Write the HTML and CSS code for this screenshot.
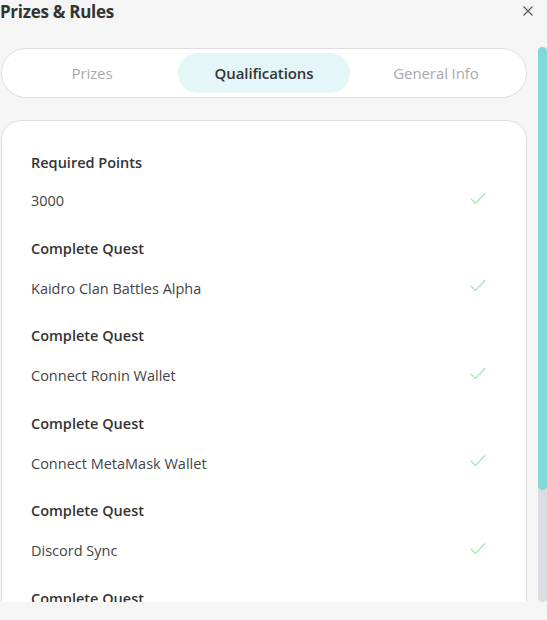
FILE: index.html
```html
<!DOCTYPE html>
<html>
<head>
<meta charset="utf-8">
<link rel="stylesheet" href="styles.css">
</head>
<body>
<div class="modal">
  <header class="modal-head">
    <h1 class="title">Prizes &amp; Rules</h1>
    <button class="close" aria-label="Close">
      <svg width="10" height="10" viewBox="0 0 10 10"><path d="M0.5 0.5L9.5 9.5M9.5 0.5L0.5 9.5" stroke="#555" stroke-width="1.1" fill="none"/></svg>
    </button>
  </header>
  <div class="body">
    <div class="content">
      <nav class="tabs">
        <div class="tab">Prizes</div>
        <div class="tab active">Qualifications</div>
        <div class="tab">General Info</div>
      </nav>
      <section class="card">
        <div class="item first">
          <div class="label">Required Points</div>
          <div class="row"><span class="value">3000</span><svg class="check" width="16" height="13" viewBox="0 0 16 13"><path d="M0.8 6.8L5.4 11.4L15.2 1.2" stroke="#a9e2b4" stroke-width="1.3" fill="none"/></svg></div>
        </div>
        <div class="item">
          <div class="label">Complete Quest</div>
          <div class="row"><span class="value">Kaidro Clan Battles Alpha</span><svg class="check" width="16" height="13" viewBox="0 0 16 13"><path d="M0.8 6.8L5.4 11.4L15.2 1.2" stroke="#a9e2b4" stroke-width="1.3" fill="none"/></svg></div>
        </div>
        <div class="item">
          <div class="label">Complete Quest</div>
          <div class="row"><span class="value">Connect Ronin Wallet</span><svg class="check" width="16" height="13" viewBox="0 0 16 13"><path d="M0.8 6.8L5.4 11.4L15.2 1.2" stroke="#a9e2b4" stroke-width="1.3" fill="none"/></svg></div>
        </div>
        <div class="item">
          <div class="label">Complete Quest</div>
          <div class="row"><span class="value">Connect MetaMask Wallet</span><svg class="check" width="16" height="13" viewBox="0 0 16 13"><path d="M0.8 6.8L5.4 11.4L15.2 1.2" stroke="#a9e2b4" stroke-width="1.3" fill="none"/></svg></div>
        </div>
        <div class="item">
          <div class="label">Complete Quest</div>
          <div class="row"><span class="value">Discord Sync</span><svg class="check" width="16" height="13" viewBox="0 0 16 13"><path d="M0.8 6.8L5.4 11.4L15.2 1.2" stroke="#a9e2b4" stroke-width="1.3" fill="none"/></svg></div>
        </div>
        <div class="item">
          <div class="label">Complete Quest</div>
          <div class="row"><span class="value">Twitter Sync</span><svg class="check" width="16" height="13" viewBox="0 0 16 13"><path d="M0.8 6.8L5.4 11.4L15.2 1.2" stroke="#a9e2b4" stroke-width="1.3" fill="none"/></svg></div>
        </div>
      </section>
    </div>
    <div class="scrollbar"><div class="thumb"></div></div>
  </div>
</div>
</body>
</html>
```
FILE: styles.css
```css
* { box-sizing: border-box; }
html, body { margin: 0; padding: 0; }
body {
  background: #f5f5f5;
  font-family: "Open Sans", "Noto Sans", sans-serif;
  color: #333;
  width: 547px;
  height: 620px;
  overflow: hidden;
}
.modal {
  display: flex;
  flex-direction: column;
  height: 620px;
  padding-bottom: 18px;
}
.modal-head {
  display: flex;
  justify-content: space-between;
  align-items: flex-start;
  height: 40px;
  flex: none;
}
.title {
  margin: 0;
  font-size: 17px;
  font-weight: 700;
  line-height: 24px;
  color: #333;
  letter-spacing: -0.3px;
}
.close {
  border: 0;
  background: none;
  padding: 0;
  margin: 6px 14px 0 0;
  width: 10px;
  height: 10px;
  display: flex;
}
.body {
  flex: 1;
  min-height: 0;
  display: flex;
}
.content {
  flex: 1;
  min-width: 0;
  overflow: hidden;
  padding: 8px 11px 0 1px;
}
.scrollbar {
  width: 9px;
  flex: none;
  margin-top: 7px;
  background: #dcdce0;
  border-radius: 5px;
}
.thumb {
  height: 443px;
  background: #7fd9d7;
  border-radius: 5px;
}
.tabs {
  display: grid;
  grid-template-columns: 1fr 1fr 1fr;
  background: #fff;
  border: 1px solid #dedede;
  border-radius: 25px;
  padding: 4px;
  height: 50px;
}
.tab {
  display: flex;
  align-items: center;
  justify-content: center;
  border-radius: 21px;
  font-size: 15px;
  color: #a9a9a9;
  font-weight: 500;
  letter-spacing: -0.1px;
}
.tab.active {
  background: #e4f6f7;
  color: #333;
  font-weight: 600;
}
.card {
  margin-top: 22px;
  background: #fff;
  border: 1px solid #dedede;
  border-radius: 20px;
  padding: 31px 40px 70px 29px;
}
.item { padding-bottom: 25.5px; }
.label {
  font-size: 14.5px;
  font-weight: 600;
  line-height: 22px;
  color: #333;
}
.row {
  margin-top: 18px;
  display: flex;
  justify-content: space-between;
  align-items: center;
}
.item.first .row { margin-top: 16px; }
.value {
  font-size: 14.5px;
  line-height: 22px;
  color: #444;
}
.check { margin-top: -6px; }
```
